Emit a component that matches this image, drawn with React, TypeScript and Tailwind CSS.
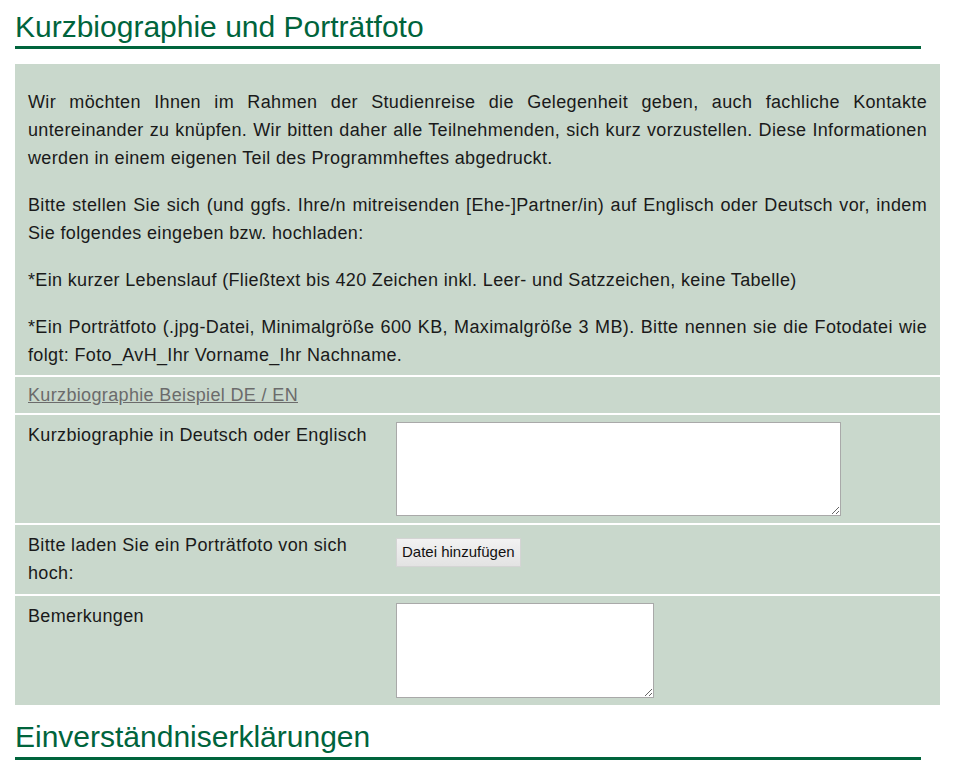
import React from "react";

const font = { fontFamily: '"Liberation Sans", Arial, sans-serif' };

function Row({ label, children, className }: { label: string; children: React.ReactNode; className: string }) {
  return (
    <div className={`flex bg-[#c9d8cc] mt-[2px] ${className}`}>
      <div className="w-[368px] shrink-0 pl-[13px] pr-[13px] pt-[6px] leading-[28px] text-[18px] tracking-[0.35px] text-[#1a1a1a]">{label}</div>
      <div className="pl-[13px] pt-[7px]">{children}</div>
    </div>
  );
}

export default function App() {
  return (
    <div className="bg-white w-[958px] h-[765px] overflow-hidden" style={font}>
      <div className="pl-[15px] pr-[18px]">
        <h2 className="w-[906px] text-[30px] leading-[34px] pt-[10px] pb-[2px] border-b-[3px] border-[#00643c] text-[#00643c]">
          Kurzbiographie und Porträtfoto
        </h2>
        <div className="mt-[15px] w-[925px]">
          <div className="bg-[#c9d8cc] pt-[24px] pb-[6px] px-[13px] text-[18px] tracking-[0.35px] leading-[28px] text-[#1a1a1a] text-justify">
            <p>
              Wir möchten Ihnen im Rahmen der Studienreise die Gelegenheit geben, auch fachliche Kontakte untereinander zu knüpfen. Wir bitten daher alle Teilnehmenden, sich kurz vorzustellen. Diese Informationen werden in einem eigenen Teil des Programmheftes abgedruckt.
            </p>
            <p className="mt-[19px]">
              Bitte stellen Sie sich (und ggfs. Ihre/n mitreisenden [Ehe-]Partner/in) auf Englisch oder Deutsch vor, indem Sie folgendes eingeben bzw. hochladen:
            </p>
            <p className="mt-[19px]">
              *Ein kurzer Lebenslauf (Fließtext bis 420 Zeichen inkl. Leer- und Satzzeichen, keine Tabelle)
            </p>
            <p className="mt-[19px]">
              *Ein Porträtfoto (.jpg-Datei, Minimalgröße 600 KB, Maximalgröße 3 MB). Bitte nennen sie die Fotodatei wie folgt: Foto_AvH_Ihr Vorname_Ihr Nachname.
            </p>
          </div>
          <div className="bg-[#c9d8cc] mt-[2px] h-[36px] px-[13px] flex items-center text-[18px] tracking-[0.35px] leading-[28px]">
            <a href="#" className="text-[#6b6b6b] underline">Kurzbiographie Beispiel DE / EN</a>
          </div>
          <Row label="Kurzbiographie in Deutsch oder Englisch" className="h-[108px]">
            <textarea className="block w-[445px] h-[94px] bg-white border border-[#a9a9a9] resize-y" />
          </Row>
          <Row label="Bitte laden Sie ein Porträtfoto von sich hoch:" className="h-[69px]">
            <button className="mt-[6px] h-[29px] px-[5px] text-[15px] text-[#111] bg-gradient-to-b from-[#f2f2f2] to-[#e3e3e3] border border-[#d4d4d4]">
              Datei hinzufügen
            </button>
          </Row>
          <Row label="Bemerkungen" className="h-[109px]">
            <textarea className="block w-[258px] h-[95px] bg-white border border-[#a9a9a9]" />
          </Row>
        </div>
        <h2 className="w-[906px] mt-[15px] text-[30px] leading-[34px] pb-[3px] border-b-[3px] border-[#00643c] text-[#00643c]">
          Einverständniserklärungen
        </h2>
      </div>
    </div>
  );
}
